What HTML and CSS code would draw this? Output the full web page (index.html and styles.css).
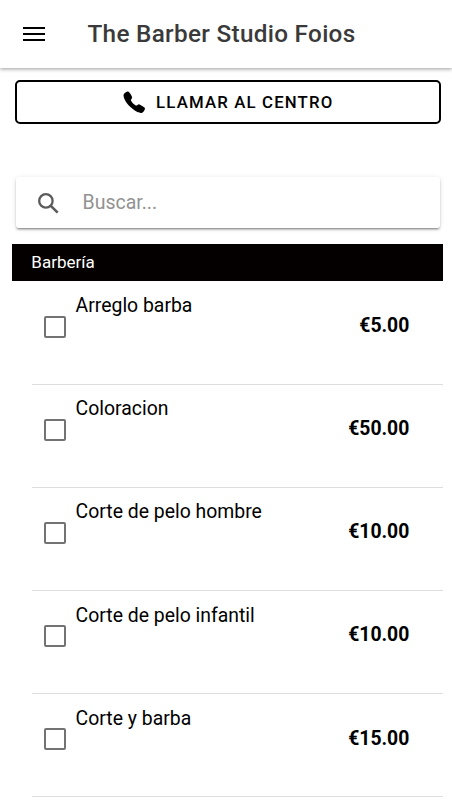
FILE: index.html
```html
<!DOCTYPE html>
<html lang="es">
<head>
<meta charset="utf-8">
<meta name="viewport" content="width=device-width, initial-scale=1">
<title>The Barber Studio Foios</title>
<link rel="stylesheet" href="styles.css">
</head>
<body>
<header class="toolbar">
  <svg class="menu" viewBox="0 0 22 14" aria-hidden="true"><path d="M0 1h22M0 7h22M0 13h22" stroke="#000" stroke-width="2"/></svg>
  <h1 class="title">The Barber Studio Foios</h1>
</header>
<main>
  <button class="call">
    <svg class="phone" viewBox="0 0 512 512" aria-hidden="true"><path d="M391 480c-19.52 0-46.94-7.06-88-30-49.93-28-88.55-53.85-138.21-103.38C116.91 298.77 93.61 267.79 61 208.45c-36.84-67-30.56-102.12-23.54-117.13C45.82 73.38 58.16 62.65 74.11 52a176.3 176.3 0 0 1 28.64-15.2c1-.43 1.93-.84 2.76-1.21 4.95-2.23 12.45-5.6 21.95-2 6.34 2.38 12 7.25 20.86 16 18.17 17.92 43 57.83 52.16 77.43 6.15 13.21 10.22 21.93 10.23 31.71 0 11.45-5.76 20.28-12.75 29.81-1.31 1.79-2.61 3.5-3.87 5.16-7.61 10-9.28 12.89-8.18 18.05 2.23 10.37 18.86 41.24 46.19 68.51s57.31 42.85 67.72 45.07c5.38 1.15 8.33-.59 18.65-8.47 1.48-1.13 3-2.3 4.59-3.47 10.66-7.93 19.08-13.54 30.26-13.54h.06c9.73 0 18.06 4.22 31.86 11.18 18 9.08 59.11 33.59 77.14 51.78 8.77 8.84 13.66 14.48 16.05 20.81 3.6 9.53.21 17-2 22-.37.83-.78 1.74-1.21 2.75a176.49 176.49 0 0 1-15.29 28.58c-10.63 15.9-21.4 28.21-39.38 36.58A67.42 67.42 0 0 1 391 480z"/></svg>
    <span>LLAMAR AL CENTRO</span>
  </button>
  <label class="search">
    <svg class="lens" viewBox="0 0 21 21" aria-hidden="true"><g fill="none" stroke="#5b5b5b"><circle cx="7.9" cy="7.9" r="6.7" stroke-width="2.3"/><path d="M12.8 12.8l6.9 6.9" stroke-width="2.6"/></g></svg>
    <input class="query" type="text" placeholder="Buscar...">
  </label>
  <section class="group">
    <h2 class="group-title">Barbería</h2>
    <label class="item"><span class="box"></span><span class="name">Arreglo barba</span><b class="price">€5.00</b></label>
    <label class="item"><span class="box"></span><span class="name">Coloracion</span><b class="price">€50.00</b></label>
    <label class="item"><span class="box"></span><span class="name">Corte de pelo hombre</span><b class="price">€10.00</b></label>
    <label class="item"><span class="box"></span><span class="name">Corte de pelo infantil</span><b class="price">€10.00</b></label>
    <label class="item"><span class="box"></span><span class="name">Corte y barba</span><b class="price">€15.00</b></label>
  </section>
</main>
</body>
</html>
```
FILE: styles.css
```css
* { box-sizing: border-box; }
html { height: 100%; overflow: hidden; }
body {
  margin: 0;
  height: 100%;
  overflow: hidden;
  background: #fff;
  color: #000;
  font-family: Roboto, sans-serif;
}
.toolbar {
  display: flex;
  align-items: center;
  height: 68px;
  padding-left: 23px;
  background: #fff;
  box-shadow: 0 1px 4px rgba(0, 0, 0, .4);
}
.menu { width: 22px; height: 14px; }
.title {
  margin: 0 0 0 42.5px;
  font-size: 24.3px;
  font-weight: 500;
  line-height: 30px;
  letter-spacing: .3px;
  color: #3a3a3a;
  white-space: nowrap;
}
.call {
  display: flex;
  align-items: center;
  justify-content: center;
  width: 426px;
  height: 44px;
  margin: 12px 0 0 15px;
  padding: 0 1px 0 0;
  border: 2px solid #000;
  border-radius: 5px;
  background: #fff;
  color: #000;
  font: 500 16.8px/20px Roboto, sans-serif;
  letter-spacing: 1.15px;
}
.phone { width: 24.5px; height: 24.5px; margin-right: 10px; }
.search {
  display: flex;
  align-items: center;
  width: 424px;
  height: 51px;
  margin: 53px 0 0 16px;
  padding-left: 21.5px;
  border-radius: 3px;
  background: #fff;
  box-shadow: 0 3px 1px -2px rgba(0, 0, 0, .2), 0 2px 2px rgba(0, 0, 0, .2), 0 1px 5px rgba(0, 0, 0, .12);
}
.lens { width: 21px; height: 21px; margin-top: 2px; }
.query {
  width: 300px;
  margin: 0 0 0 24px;
  padding: 0;
  border: 0;
  outline: 0;
  background: none;
  font: 400 19.5px/24px Roboto, sans-serif;
}
.query::placeholder { color: #929292; opacity: 1; }
.group { margin: 16px 8.7px 0 12.3px; }
.group-title {
  height: 37.4px;
  margin: 0;
  padding-left: 19px;
  background: #040000;
  color: #fff;
  font-size: 17px;
  font-weight: 400;
  line-height: 37px;
}
.item {
  display: flex;
  align-items: flex-start;
  height: 103.2px;
  margin-left: 19.3px;
  border-bottom: 1px solid #dedede;
}
.box {
  width: 22px;
  height: 22px;
  margin: 34.2px 0 0 12px;
  border: 2px solid #737373;
  border-radius: 2px;
}
.name {
  margin: 12.6px 0 0 10px;
  font-size: 19.4px;
  line-height: 24px;
}
.price {
  margin: 32.5px 34px 0 auto;
  font-size: 19.35px;
  font-weight: 700;
  line-height: 24px;
}
```
